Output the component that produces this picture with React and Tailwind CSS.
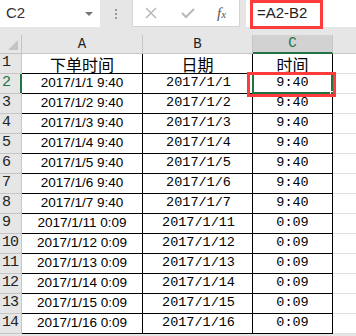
import React from 'react'

const rows = [
  ['2017/1/1 9:40', '2017/1/1', '9:40'],
  ['2017/1/2 9:40', '2017/1/2', '9:40'],
  ['2017/1/3 9:40', '2017/1/3', '9:40'],
  ['2017/1/4 9:40', '2017/1/4', '9:40'],
  ['2017/1/5 9:40', '2017/1/5', '9:40'],
  ['2017/1/6 9:40', '2017/1/6', '9:40'],
  ['2017/1/7 9:40', '2017/1/7', '9:40'],
  ['2017/1/11 0:09', '2017/1/11', '0:09'],
  ['2017/1/12 0:09', '2017/1/12', '0:09'],
  ['2017/1/13 0:09', '2017/1/13', '0:09'],
  ['2017/1/14 0:09', '2017/1/14', '0:09'],
  ['2017/1/15 0:09', '2017/1/15', '0:09'],
  ['2017/1/16 0:09', '2017/1/16', '0:09'],
]

const mono = "font-['Liberation_Mono','DejaVu_Sans_Mono',monospace]"
const cjk = "font-['Noto_Sans_CJK_SC',sans-serif]"
const sans = "font-['Liberation_Sans',Arial,sans-serif]"

const RowNum = ({ n, active }) => (
  <div
    className={`relative flex h-5 items-center border-r border-b border-[#c6c6c6] bg-[#e6e6e6] pl-[2px] text-[15px] tracking-[-1px] ${mono} ${
      active ? 'text-[#217346]' : 'text-[#222]'
    }`}
  >
    {n}
    {active && <div className="absolute right-[-1px] top-0 h-full w-[2px] bg-[#217346]" />}
  </div>
)

export default function App() {
  return (
    <div className="relative h-[336px] w-[356px] overflow-hidden bg-[#e6e6e6]">
      {/* Formula bar */}
      <div className="flex h-[27px] items-stretch">
        <div className={`flex w-[100px] items-center justify-between bg-white pl-[6px] pr-[7px] text-[15px] text-[#333] ${sans}`}>
          <span>C2</span>
          <span className="h-0 w-0 border-x-[4px] border-t-[4px] border-x-transparent border-t-[#777]" />
        </div>
        <div className="flex w-[32px] flex-col items-center justify-center gap-[2px]">
          <span className="h-[2px] w-[2px] bg-[#999]" />
          <span className="h-[2px] w-[2px] bg-[#999]" />
          <span className="h-[2px] w-[2px] bg-[#999]" />
        </div>
        <div className="flex w-[108px] items-center border border-t-0 border-[#d4d4d4] bg-white">
          <svg width="12" height="12" viewBox="0 0 12 12" className="ml-[12px]">
            <path d="M1 1 L11 11 M11 1 L1 11" stroke="#b8b8b8" strokeWidth="1.5" fill="none" />
          </svg>
          <svg width="14" height="12" viewBox="0 0 14 12" className="ml-[24px]">
            <path d="M1 6 L5 10 L13 2" stroke="#b8b8b8" strokeWidth="2" fill="none" />
          </svg>
          <span className="ml-[22px] font-['Liberation_Serif',serif] text-[15px] italic text-[#555]">
            f<span className="text-[11px]">x</span>
          </span>
        </div>
        <div className={`ml-[6px] flex flex-1 items-center bg-white pl-[11px] text-[15px] text-[#222] ${sans}`}>
          =A2-B2
        </div>
      </div>

      {/* Sheet */}
      <div className="mt-[8px] grid grid-cols-[22px_121px_110px_80px_1fr] bg-white">
        {/* Column headers */}
        <div className="flex h-[19px] items-end justify-end border-r border-b border-[#c6c6c6] bg-[#e6e6e6] pb-[3px] pr-[3px]">
          <span className="h-0 w-0 border-l-[10px] border-b-[10px] border-l-transparent border-b-[#c4c4c4]" />
        </div>
        <div className={`flex h-[19px] items-center justify-center border-r border-b border-[#c6c6c6] bg-[#e6e6e6] text-[14px] text-[#222] ${mono}`}>A</div>
        <div className={`flex h-[19px] items-center justify-center border-r border-b border-[#c6c6c6] bg-[#e6e6e6] text-[14px] text-[#222] ${mono}`}>B</div>
        <div className={`flex h-[19px] items-center justify-center border-r border-b-2 border-r-[#c6c6c6] border-b-[#217346] bg-[#d2d2d2] text-[14px] text-[#217346] ${mono}`}>C</div>
        <div className="h-[19px] border-b border-[#c6c6c6] bg-[#e6e6e6]" />

        {/* Row 1 */}
        <RowNum n={1} />
        <div className={`flex h-5 items-center justify-center border-r border-b border-black text-[16px] text-black ${cjk}`}>下单时间</div>
        <div className={`flex h-5 items-center justify-center border-r border-b border-black text-[16px] text-black ${cjk}`}>日期</div>
        <div className={`flex h-5 items-center justify-center border-r border-b border-black text-[16px] text-black ${cjk}`}>时间</div>
        <div className="h-5 border-b border-[#e0e0e0]" />

        {rows.map((r, i) => (
          <React.Fragment key={i}>
            <RowNum n={i + 2} active={i === 0} />
            <div className={`flex h-5 items-center justify-center border-r border-b border-black text-[13.5px] text-black ${sans}`}>{r[0]}</div>
            <div className={`flex h-5 items-center justify-center border-r border-b border-black pl-[2px] text-[13.5px] text-black ${mono}`}>{r[1]}</div>
            <div className={`relative flex h-5 items-center justify-center border-r border-b border-black text-[13.5px] text-black ${mono}`}>
              {r[2]}
              {i === 0 && (
                <>
                  <div className="absolute inset-[-1px] border-2 border-[#217346]" />
                  <div className="absolute bottom-[-3px] right-[-3px] h-[5px] w-[5px] border border-white bg-[#217346]" />
                </>
              )}
            </div>
            <div className="h-5 border-b border-[#e0e0e0]" />
          </React.Fragment>
        ))}
      </div>

      {/* Annotations */}
      <div className="pointer-events-none absolute left-[250px] top-0 h-[29px] w-[73px] border-[3px] border-[#ff3b3b]" />
      <div className="pointer-events-none absolute left-[247px] top-[72px] h-[25px] w-[89px] border-[3px] border-[#ff3b3b]" />
    </div>
  )
}
